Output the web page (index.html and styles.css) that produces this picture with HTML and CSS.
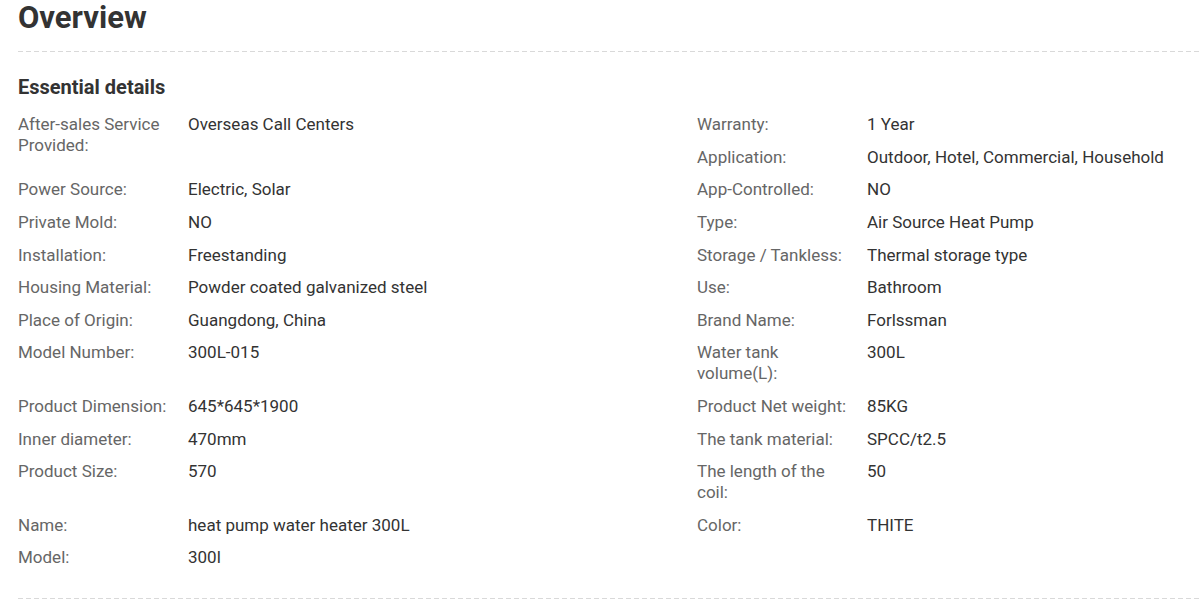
FILE: index.html
```html
<!DOCTYPE html>
<html lang="en">
<head>
<meta charset="utf-8">
<title>Overview</title>
<link rel="stylesheet" href="styles.css">
</head>
<body>
<div class="page">
  <h1 class="title">Overview</h1>
  <div class="dash"></div>
  <h2 class="subtitle">Essential details</h2>
  <div class="attrs">
    <div class="item tall"><div class="key">After-sales Service Provided:</div><div class="val">Overseas Call Centers</div></div>
    <div class="item"><div class="key">Warranty:</div><div class="val">1 Year</div></div>
    <div class="item"><div class="key">Application:</div><div class="val">Outdoor, Hotel, Commercial, Household</div></div>
    <div class="item"><div class="key">Power Source:</div><div class="val">Electric, Solar</div></div>
    <div class="item"><div class="key">App-Controlled:</div><div class="val">NO</div></div>
    <div class="item"><div class="key">Private Mold:</div><div class="val">NO</div></div>
    <div class="item"><div class="key">Type:</div><div class="val">Air Source Heat Pump</div></div>
    <div class="item"><div class="key">Installation:</div><div class="val">Freestanding</div></div>
    <div class="item"><div class="key">Storage / Tankless:</div><div class="val">Thermal storage type</div></div>
    <div class="item"><div class="key">Housing Material:</div><div class="val">Powder coated galvanized steel</div></div>
    <div class="item"><div class="key">Use:</div><div class="val">Bathroom</div></div>
    <div class="item"><div class="key">Place of Origin:</div><div class="val">Guangdong, China</div></div>
    <div class="item"><div class="key">Brand Name:</div><div class="val">Forlssman</div></div>
    <div class="item"><div class="key">Model Number:</div><div class="val">300L-015</div></div>
    <div class="item"><div class="key">Water tank volume(L):</div><div class="val">300L</div></div>
    <div class="item"><div class="key">Product Dimension:</div><div class="val">645*645*1900</div></div>
    <div class="item"><div class="key">Product Net weight:</div><div class="val">85KG</div></div>
    <div class="item"><div class="key">Inner diameter:</div><div class="val">470mm</div></div>
    <div class="item"><div class="key">The tank material:</div><div class="val">SPCC/t2.5</div></div>
    <div class="item"><div class="key">Product Size:</div><div class="val">570</div></div>
    <div class="item"><div class="key">The length of the coil:</div><div class="val">50</div></div>
    <div class="item"><div class="key">Name:</div><div class="val">heat pump water heater 300L</div></div>
    <div class="item"><div class="key">Color:</div><div class="val">THITE</div></div>
    <div class="item"><div class="key">Model:</div><div class="val">300l</div></div>
  </div>
  <div class="dash bottom"></div>
</div>
</body>
</html>
```

FILE: styles.css
```css
html, body {
  margin: 0;
  padding: 0;
  background: #fff;
}
body {
  font-family: Roboto, "Liberation Sans", Arial, sans-serif;
  color: #333;
}
.page {
  padding-left: 18px;
}
.title {
  margin: 0;
  font-size: 31px;
  line-height: 36px;
  font-weight: 700;
  color: #333;
  padding-bottom: 15px;
}
.dash {
  height: 1px;
  background: repeating-linear-gradient(to right, #d9d9d9 0 5px, transparent 5px 8px);
}
.subtitle {
  margin: 23px 0 9.5px;
  font-size: 20px;
  line-height: 24px;
  font-weight: 700;
  color: #333;
}
.attrs {
  display: grid;
  grid-template-columns: 679px 1fr;
}
.item {
  display: flex;
  align-items: flex-start;
  padding: 5.8px 0;
  font-size: 17px;
  line-height: 21px;
}
.item.tall {
  grid-row: span 2;
}
.key {
  flex: 0 0 170px;
  box-sizing: border-box;
  padding-right: 12px;
  color: #666;
}
.val {
  flex: 1 1 auto;
  color: #333;
}
.dash.bottom {
  margin-top: 23.5px;
}
```
